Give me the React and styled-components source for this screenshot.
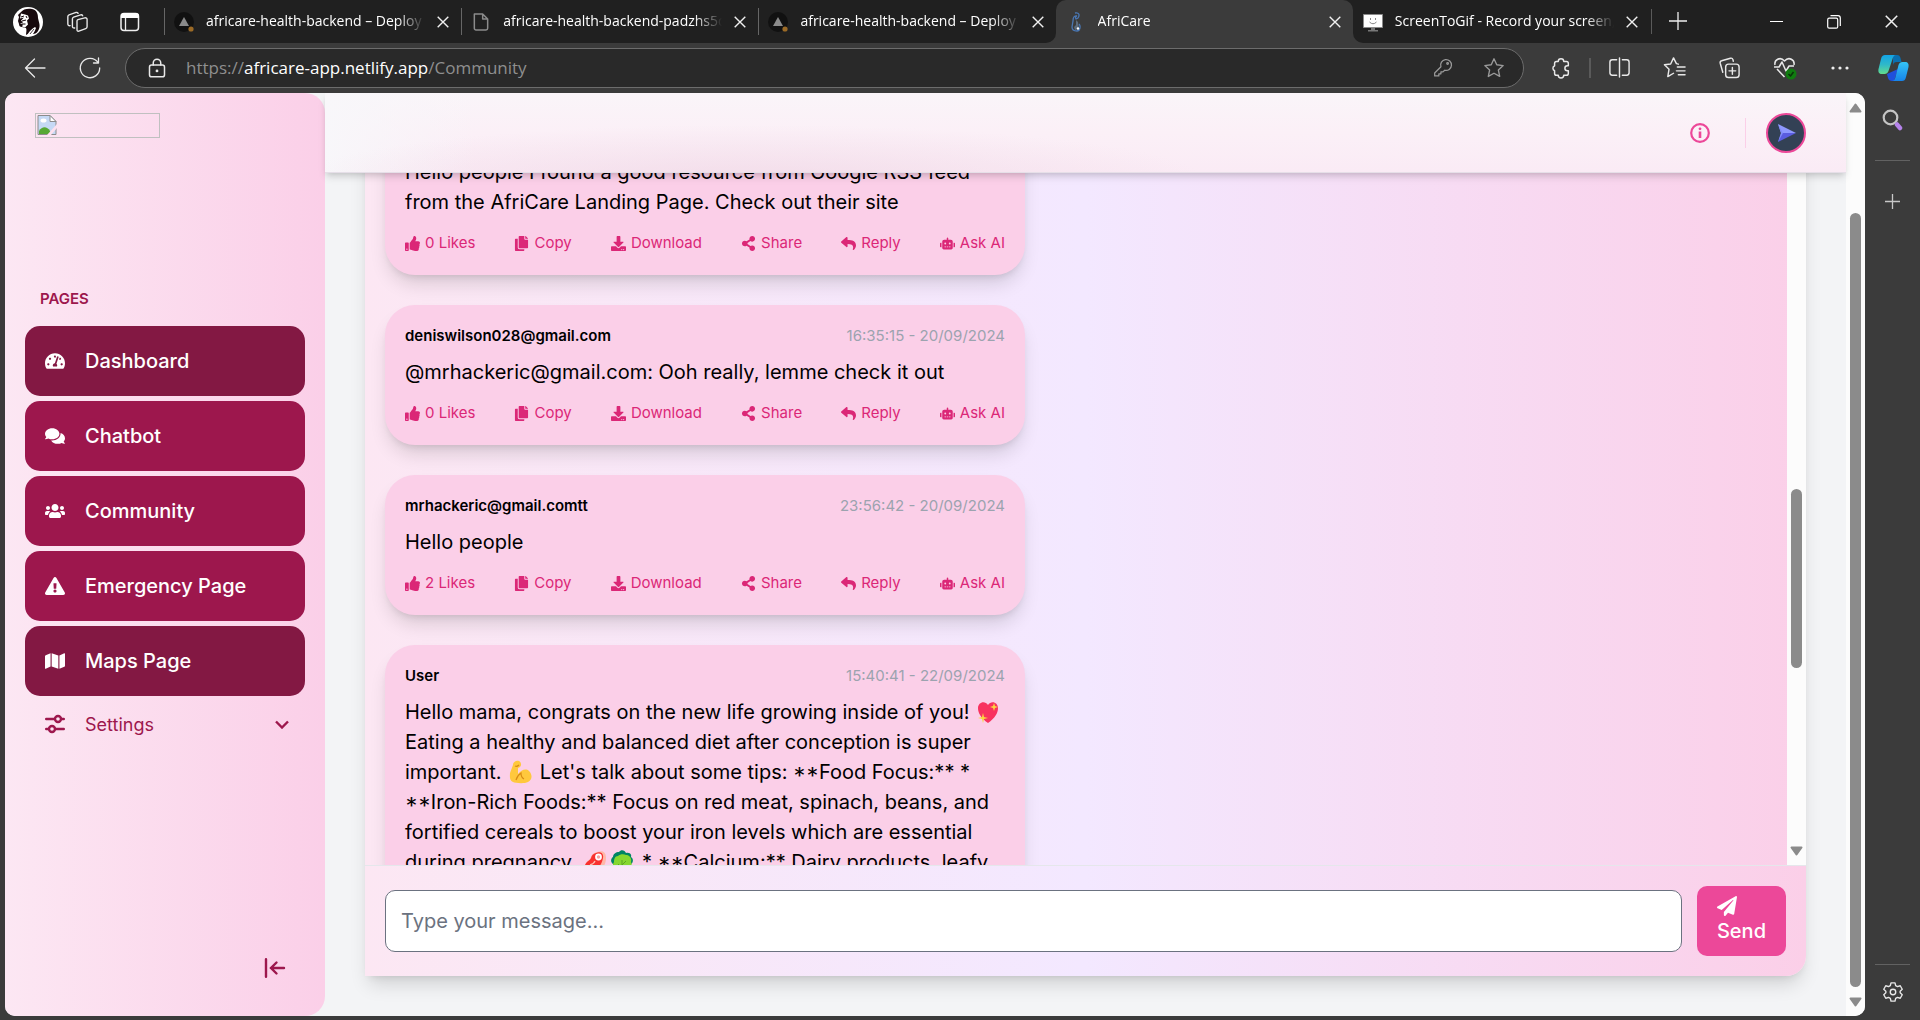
import React from "react";
import styled, { createGlobalStyle } from "styled-components";
import {
  FaTachometerAlt, FaComments, FaUsers, FaExclamationTriangle, FaMap,
  FaThumbsUp, FaCopy, FaDownload, FaShareAlt, FaReply, FaRobot, FaPaperPlane,
} from "react-icons/fa";

const GlobalStyle = createGlobalStyle`
  *, *::before, *::after { box-sizing: border-box; }
  body { margin: 0; background: #3b3b3b; font-family: Inter, "Liberation Sans", sans-serif; }
  button { font: inherit; color: inherit; background: none; border: 0; padding: 0; cursor: pointer; }
  a { color: inherit; text-decoration: none; }
  svg { display: block; flex-shrink: 0; }
`;

/* ---------- browser frame ---------- */

const Window = styled.div`
  height: 100vh;
  display: flex;
  flex-direction: column;
  overflow: hidden;
  background: #3b3b3b;
  color: #fff;
`;

const TabBar = styled.header`
  height: 43px;
  flex-shrink: 0;
  display: flex;
  background: #202020;
  font-family: "Open Sans", "Noto Sans", sans-serif;
  font-size: 14px;
`;

const TabTools = styled.div`
  width: 164px;
  padding-left: 13px;
  display: flex;
  align-items: center;
  gap: 17px;
`;

const Tabs = styled.div`
  display: flex;
  flex: 0 1 1486px;
  min-width: 0;
`;

const Tab = styled.div`
  flex: 1 1 0;
  min-width: 0;
  display: flex;
  align-items: center;
  gap: 12px;
  padding: 0 12px 0 9px;
  background: ${(p) => (p.$active ? "#3b3b3b" : "#202020")};
  border-radius: ${(p) => (p.$active ? "10px 10px 0 0" : p.$corner)};
  border-left: 1px solid transparent;
  border-image: ${(p) =>
    p.$divider ? "linear-gradient(transparent 9px, #666 9px 34px, transparent 34px) 1" : "none"};
`;

const TabSlot = styled.div`
  flex: 1 1 0;
  min-width: 0;
  display: flex;
  background: ${(p) => (p.$active ? "#202020" : "#3b3b3b")};
`;

const TabTitle = styled.span`
  flex: 1;
  min-width: 0;
  padding-bottom: 1px;
  line-height: 20px;
  white-space: nowrap;
  overflow: hidden;
  mask-image: linear-gradient(to right, #000 calc(100% - 28px), transparent);
`;

const IconButton = styled.button`
  width: ${(p) => p.$w || 55}px;
  height: ${(p) => p.$h || 40}px;
  flex-shrink: 0;
  display: flex;
  align-items: center;
  justify-content: center;
`;

const WindowControls = styled.div`
  margin-left: auto;
  display: flex;
`;

const Toolbar = styled.nav`
  height: 50px;
  flex-shrink: 0;
  display: flex;
  align-items: center;
  padding-left: 7px;
  padding-bottom: 1px;
`;

const Address = styled.div`
  flex: 1;
  min-width: 0;
  height: 40px;
  margin: 0 9px 0 8px;
  padding: 0 19px 0 21px;
  display: flex;
  align-items: center;
  border: 1px solid #6c6c6c;
  border-radius: 20px;
  background: #292929;
`;

const Url = styled.span`
  flex: 1;
  margin-left: 19px;
  font-family: "Open Sans", "Noto Sans", sans-serif;
  font-size: 17px;
  line-height: 24px;
  color: #8f8f8f;
  b { font-weight: 400; color: #fff; }
`;

const AddressIcons = styled.div`
  display: flex;
  gap: 31px;
`;

const Divider = styled.span`
  align-self: center;
  width: ${(p) => p.$w || 2}px;
  height: ${(p) => p.$h || 20}px;
  margin: 0 1px;
  background: #5a5a5a;
`;

const Body = styled.div`
  flex: 1;
  min-height: 0;
  display: flex;
  padding: 0 0 4px 5px;
`;

const EdgeBar = styled.aside`
  width: 55px;
  display: flex;
  flex-direction: column;
  align-items: center;
  padding: 7px 0 4px;
`;

const EdgeRule = styled.hr`
  width: 35px;
  height: 1px;
  margin: ${(p) => (p.$bottom ? "auto 0 7px" : "20px 0")};
  border: 0;
  flex-shrink: 0;
  background: #626262;
`;

/* ---------- page ---------- */

const Page = styled.div`
  flex: 1;
  min-width: 0;
  display: flex;
  overflow: hidden;
  border-radius: 10px;
  background: #f3f4f6;
  color: #000;
`;

const Sidebar = styled.aside`
  width: 320px;
  flex-shrink: 0;
  display: flex;
  flex-direction: column;
  padding: 20px 20px 28px;
  border-radius: 0 20px 20px 0;
  background: linear-gradient(to right, #fce7f3, #fbcfe8);
  color: #9d174d;
`;

const Logo = styled.div`
  width: 125px;
  height: 25px;
  margin: 0 10px 151px;
  padding: 1px;
  border: 1px solid #c0c0c0;
`;

const NavHeading = styled.h2`
  margin: 0 15px 17px;
  font-size: 15px;
  line-height: 20px;
  font-weight: 600;
`;

const NavList = styled.ul`
  list-style: none;
  margin: 0;
  padding: 0;
  display: flex;
  flex-direction: column;
  gap: 5px;
`;

const NavLink = styled.a`
  height: 70px;
  display: flex;
  align-items: center;
  gap: 20px;
  padding: 0 20px;
  border-radius: 15px;
  background: ${(p) => (p.$dark ? "#831843" : "#9d174d")};
  color: #fff;
  font-size: 20px;
  font-weight: 500;
`;

const SettingsButton = styled.button`
  width: 100%;
  height: 46px;
  display: flex;
  align-items: center;
  gap: 20px;
  padding: 0 16px 0 20px;
  font-size: 18px;
  span { flex: 1; text-align: left; }
`;

const Collapse = styled(IconButton)`
  margin: auto 10px 0 auto;
`;

const Main = styled.main`
  flex: 1;
  min-width: 0;
  display: grid;
  grid-template: 80px minmax(0, 1fr) / minmax(0, 1fr);
`;

const TopBar = styled.div`
  grid-area: 1 / 1;
  z-index: 2;
  display: flex;
  align-items: center;
  justify-content: flex-end;
  padding-right: 40px;
  border-bottom: 1px solid #e6dfe8;
  background:
    radial-gradient(ellipse 30% 70% at 28% 110%, rgba(238, 212, 226, 0.6), transparent),
    linear-gradient(to right, #f8f7fa, transparent 10%),
    linear-gradient(to bottom, #faf5f9, #fbf0f7 50%, #faebf5);
  box-shadow: 0 5px 8px -1px rgba(0, 0, 0, 0.12), 0 3px 5px -2px rgba(0, 0, 0, 0.1);
`;

const TopRule = styled.span`
  width: 1px;
  height: 30px;
  margin: 0 20px 0 25px;
  background: #fbcfe8;
`;

const Avatar = styled.button`
  width: 40px;
  height: 40px;
  display: flex;
  align-items: center;
  justify-content: center;
  border: 2px solid #ec4899;
  border-radius: 50%;
  background: #334155;
`;

const Chat = styled.section`
  grid-area: 1 / 1 / 3 / 2;
  margin: 0 40px 40px;
  display: flex;
  flex-direction: column;
  overflow: hidden;
  border-radius: 0 0 20px 0;
  background: linear-gradient(to right, #fce7f3, #f3e8ff, #fbcfe8);
  box-shadow: 0 12px 19px -4px rgba(0, 0, 0, 0.14), 0 5px 8px -5px rgba(0, 0, 0, 0.12);
`;

const Feed = styled.div`
  flex: 1;
  min-height: 0;
  display: flex;
`;

const Messages = styled.div`
  flex: 1;
  min-width: 0;
  overflow: hidden;
  display: flex;
  flex-direction: column;
  align-items: flex-start;
  gap: 30px;
  padding: 12px 20px 0;
`;

const Card = styled.article`
  width: 640px;
  max-width: 100%;
  flex-shrink: 0;
  padding: 20px;
  border-radius: 30px;
  background: #fbcfe8;
  box-shadow: 0 12px 19px -4px rgba(0, 0, 0, 0.14), 0 5px 8px -5px rgba(0, 0, 0, 0.14);
`;

const CardHead = styled.div`
  min-height: 22px;
  display: flex;
  justify-content: space-between;
  font-size: 15px;
  line-height: 22px;
  strong { font-weight: 600; }
  time { color: #9ca3af; }
`;

const CardText = styled.p`
  margin: 10px 0 0;
  font-size: 20px;
  line-height: 30px;
`;

const Stars = styled.span`
  font-feature-settings: "case" 1;
`;

const Actions = styled.div`
  margin-top: 14px;
  display: flex;
  justify-content: space-between;
  color: #db2777;
  font-size: 15px;
  line-height: 24px;
`;

const Action = styled.button`
  display: flex;
  align-items: center;
  gap: 5px;
  svg { width: 15px; height: 15px; }
`;

const Emoji = styled.svg`
  display: inline-block;
  width: 27px;
  height: 24px;
  vertical-align: -5px;
`;

const Composer = styled.form`
  flex-shrink: 0;
  display: flex;
  align-items: center;
  gap: 15px;
  padding: 20px;
  border-top: 1px solid #e5e7eb;
`;

const HiddenLabel = styled.label`
  position: absolute;
  width: 1px;
  height: 1px;
  overflow: hidden;
  clip-path: inset(50%);
`;

const MessageInput = styled.input`
  flex: 1;
  min-width: 0;
  height: 62px;
  padding: 0 15px;
  border: 1px solid #6b7280;
  border-radius: 10px;
  background: #fff;
  font: 400 20px/30px Inter, "Liberation Sans", sans-serif;
  &::placeholder { color: #6b7280; opacity: 1; }
`;

const SendButton = styled.button`
  height: 70px;
  padding: 0 20px;
  border-radius: 10px;
  background: #ec4899;
  color: #fff;
  font-size: 20px;
  line-height: 30px;
  font-weight: 500;
`;

const Track = styled.div`
  width: 19px;
  flex-shrink: 0;
  display: flex;
  flex-direction: column;
  align-items: center;
  padding: 10px 0 9px;
  background: #fcfcfc;
`;

const Thumb = styled.div`
  width: 11px;
  flex: ${(p) => p.$size} 0 0;
  border-radius: 6px;
  background: #8b8b8b;
`;

const Space = styled.div`
  flex: ${(p) => p.$size} 0 0;
`;

/* ---------- drawings ---------- */

const Line = ({ s = 24, w = 1.3, c = "#e8e8e8", children, ...rest }) => (
  <svg width={s} height={s} viewBox="0 0 24 24" fill="none" stroke={c} strokeWidth={w}
    strokeLinecap="round" strokeLinejoin="round" aria-hidden="true" {...rest}>
    {children}
  </svg>
);

const CloseIcon = ({ s = 12 }) => (
  <svg width={s} height={s} viewBox="0 0 12 12" stroke="#f0f0f0" strokeWidth="1.4" aria-hidden="true">
    <path d="M0.7 0.7 11.3 11.3M11.3 0.7 0.7 11.3" />
  </svg>
);

const Profile = () => (
  <svg width="30" height="30" viewBox="0 0 30 30" aria-hidden="true">
    <circle cx="15" cy="15" r="15" fill="#fff" />
    <path d="M8 5c2-3 7-4 11-3 5 1 6 5 6 9 1 5 3 8 0 13-1 2-3 3-5 3l2-4-4 2-5 3c0-3 1-5 0-7l-4-1c-2 0-3-1-3-3l-1-3 1-4-1-2z" fill="#17090d" />
    <path d="M8 6.500l4 1 3 1 1 3-2 2 1 4-3 3-3-1 1-2-3-1 3-1-2-2 3-3-4 1z" fill="#fff" />
    <path d="M8 10l3-1M9 14l4-1M13 9l1 2M8.500 17h4" stroke="#17090d" strokeWidth="1" />
    <path d="M15 27c1-3 4-5 7-7l1 1c-1 3-3 6-6 8z" fill="#fff" />
    <path d="M17 27l4-5" stroke="#17090d" strokeWidth=".8" />
  </svg>
);

const Favicon = ({ kind }) => {
  if (kind === "page")
    return <Line s={20} w={1.8} c="#8b8b8b"><path d="M4 2.5h10l6 6v11a2 2 0 0 1-2 2H6a2 2 0 0 1-2-2zM14 2.5v6h6" /></Line>;
  if (kind === "africare")
    return (
      <svg width="20" height="20" viewBox="0 0 20 20" fill="none" aria-hidden="true">
        <path d="M9 1c4-1 5 2 3 5l-2 1c-1-2 0-3 1-3-3-1-4 2-4 5l-1 6c0 3 2 4 5 4s4-5 2-7" stroke="#4a78b5" strokeWidth="1.3" />
        <path d="M10 8v5l-2 2 1 3 4-1-1-7z" fill="#5b6b7d" />
        <circle cx="12" cy="16.500" r="1.200" fill="#fff" />
      </svg>
    );
  if (kind === "screen")
    return (
      <svg width="20" height="20" viewBox="0 0 20 20" aria-hidden="true">
        <path d="M0.5 2.500h19v13H0.500z" fill="#fff" stroke="#8a8a8a" />
        <path d="M8 16h4v2h3v1.500H5V18h3z" fill="#777" />
        <path d="M7.500 6v2M12.500 6v2M6.500 10q3.500 3.500 7 0" fill="none" stroke="#888" />
      </svg>
    );
  return (
    <svg width="20" height="20" viewBox="0 0 20 20" aria-hidden="true">
      <circle cx="10" cy="10" r="10" fill="#111" />
      <path d="M10 5l5 9H5z" fill="#8a8a8a" />
      <circle cx="17" cy="17" r="2.600" fill="#9b6a26" />
    </svg>
  );
};

const Copilot = () => (
  <svg width="31" height="28" viewBox="0 0 31 28" aria-hidden="true">
    <defs>
      <linearGradient id="cpA" x1="0" y1="0" x2="0" y2="1">
        <stop offset="0" stopColor="#13a4e6" /><stop offset=".5" stopColor="#2fb8c9" /><stop offset="1" stopColor="#62dc8e" />
      </linearGradient>
      <linearGradient id="cpB" x1="0" y1="0" x2="0" y2="1">
        <stop offset="0" stopColor="#35c4f5" /><stop offset="1" stopColor="#1684ea" />
      </linearGradient>
    </defs>
    <path d="M15 1h4c2 0 3 1 3.500 3l1 4h-5c-2 0-3 1-3.500 3z" fill="#0a6fb0" />
    <path d="M9 20l1 4c.5 2 2 3 4 3h2l4-12z" fill="#1f50dc" />
    <path d="M7 1h11c-2 0-3 2-3.500 4l-4 12c-.7 2-2 3-4 3H4c-3 0-4-2-3.500-5L3 5c.7-3 2-4 4-4z" fill="url(#cpA)" />
    <path d="M24 27H14c2 0 3-2 3.500-4l3-12c.7-2 2-3 4-3H27c3 0 4 2 3.500 5L28 23c-.7 3-2 4-4 4z" fill="url(#cpB)" />
  </svg>
);

const BrokenImage = () => (
  <svg width="20" height="20" viewBox="0 0 20 20" aria-hidden="true">
    <path d="M1 0.500h12l6 6v13H1z" fill="#c5d9f5" stroke="#8c8c8c" />
    <path d="M13 .5v6h6z" fill="#fff" stroke="#8c8c8c" />
    <ellipse cx="6.500" cy="5.500" rx="3" ry="2" fill="#fff" />
    <path d="M2 19v-3c3-5 8-5 11 0l1 3z" fill="#56a934" />
    <path d="M10 20 20 9v4l-6 7z" fill="#fce1ef" />
  </svg>
);

const Triangle = ({ down }) => (
  <svg width="13" height="10" viewBox="0 0 13 10" aria-hidden="true">
    <path d={down ? "M1.500 1.500h10l-5 7z" : "M1.500 8.500h10l-5-7z"} fill="#8b8b8b" stroke="#8b8b8b" strokeWidth="2" strokeLinejoin="round" />
  </svg>
);

const SettingsIcon = () => (
  <svg width="20" height="20" viewBox="0 0 20 20" fill="none" stroke="#9d174d" strokeWidth="2.400" strokeLinecap="round" aria-hidden="true">
    <path d="M1.200 5h8M17 5h1.800M1.200 15H3M11 15h7.800" />
    <circle cx="13" cy="5" r="3" />
    <circle cx="7" cy="15" r="3" />
  </svg>
);

const Heart = () => (
  <Emoji viewBox="0 0 27 24" role="img" aria-label="sparkling heart">
    <path d="M13 23C6 18 3 13 3 8c0-6 7-8 10-3 3-5 10-3 10 3 0 5-3 10-10 15z" fill="#f8325f" />
    <path d="M19 3l1 3 3 1-3 1-1 3-1-3-3-1 3-1zM8 13l1 4 4 1-4 1-1 4-1-4-4-1 4-1z" fill="#fcd53f" />
  </Emoji>
);
const Biceps = () => (
  <Emoji viewBox="0 0 27 24" role="img" aria-label="flexed biceps">
    <path d="M6 5c0-3 3-5 6-4 2 1 3 4 1 6-1 1-2 0-2 2v5c3-4 8-6 11-3 4 4 3 9-1 11-4 2-13 1-15 0-4-2-3-6-3-9 1-3 2-5 3-8z" fill="#ffc83d" />
    <path d="M8 6c2 1 3 0 4-1M9 20c1-4 2-5 5-7 0 3 1 5 3 6" fill="none" stroke="#d98c17" strokeWidth="1.200" />
  </Emoji>
);
const Meat = () => (
  <Emoji viewBox="0 0 27 24" role="img" aria-label="cut of meat">
    <path d="M15 2c6-2 9 0 9 6s-3 11-8 13c-5 1-13 1-13-4 0-6 5-6 6-10 1-3 3-4 6-5z" fill="#ffb8a8" />
    <path d="M14 3c4-2 8 0 7 5s-3 9-7 11c-4 1-11 2-11-3 0-4 5-5 6-8 1-3 2-4 5-5z" fill="#f8312f" />
    <circle cx="16.500" cy="7" r="3.400" fill="#fff" /><circle cx="16.500" cy="7" r="1.700" fill="#f5a3a0" />
    <path d="M8 15q4-1 5-4" stroke="#ffb8a8" fill="none" strokeWidth="1.300" />
  </Emoji>
);
const Greens = () => (
  <Emoji viewBox="0 0 27 24" role="img" aria-label="leafy green">
    <path d="M10 2c2-3 6-2 7 1 3-1 6 1 5 4 3 2 2 6 0 7 0 5-4 9-9 9s-9-4-9-9C1 12 2 8 4 7c0-3 3-5 6-5z" fill="#008463" />
    <path d="M9 6c2-2 6-2 8-1 4 0 6 4 5 7 2 4-1 9-5 9-3 3-9 2-10-1-3-1-4-5-2-8 0-3 1-6 4-6z" fill="#86d72f" />
    <path d="M13 21V10M13 15l4-4M13 18l-4-4" stroke="#5da423" fill="none" />
  </Emoji>
);

/* ---------- data ---------- */

const tabs = [
  { icon: "vercel", title: "africare-health-backend – Deploy", divider: true },
  { icon: "page", title: "africare-health-backend-padzhs5o", divider: true },
  { icon: "vercel", title: "africare-health-backend – Deploy", divider: true, corner: "0 0 10px 0" },
  { icon: "africare", title: "AfriCare", active: true },
  { icon: "screen", title: "ScreenToGif - Record your screen,", corner: "0 0 0 10px" },
];

const pages = [
  { label: "Dashboard", Icon: FaTachometerAlt, dark: true },
  { label: "Chatbot", Icon: FaComments },
  { label: "Community", Icon: FaUsers },
  { label: "Emergency Page", Icon: FaExclamationTriangle },
  { label: "Maps Page", Icon: FaMap, dark: true },
];

const messages = [
  {
    likes: 0,
    text: "Hello people I found a good resource from Google RSS feed from the AfriCare Landing Page. Check out their site",
  },
  {
    name: "deniswilson028@gmail.com", time: "16:35:15 - 20/09/2024", likes: 0,
    text: "@mrhackeric@gmail.com: Ooh really, lemme check it out",
  },
  { name: "mrhackeric@gmail.comtt", time: "23:56:42 - 20/09/2024", likes: 2, text: "Hello people" },
  {
    name: "User", time: "15:40:41 - 22/09/2024",
    text: (
      <>
        Hello mama, congrats on the new life growing inside of you! <Heart /> Eating a healthy and
        balanced diet after conception is super important. <Biceps /> Let's talk about some tips:{" "}
        <Stars>**</Stars>Food Focus:** * <Stars>**</Stars>Iron-Rich Foods:** Focus on red meat,
        spinach, beans, and fortified cereals to boost your iron levels which are essential during
        pregnancy. <Meat /><Greens /> * <Stars>**</Stars>Calcium:** Dairy products, leafy
      </>
    ),
  },
];

const actions = [
  ["Copy", FaCopy], ["Download", FaDownload], ["Share", FaShareAlt], ["Reply", FaReply], ["Ask AI", FaRobot],
];

function Message({ name, time, text, likes }) {
  return (
    <Card>
      <CardHead>{name && <strong>{name}</strong>}{time && <time>{time}</time>}</CardHead>
      <CardText>{text}</CardText>
      {likes !== undefined && (
        <Actions>
          <Action type="button"><FaThumbsUp />{likes} Likes</Action>
          {actions.map(([label, Icon]) => (
            <Action type="button" key={label}><Icon />{label}</Action>
          ))}
        </Actions>
      )}
    </Card>
  );
}

function ScrollTrack({ before, size, after }) {
  return (
    <Track aria-hidden="true">
      <Triangle />
      <Space $size={before} /><Thumb $size={size} /><Space $size={after} />
      <Triangle down />
    </Track>
  );
}

export default function App() {
  return (
    <Window>
      <GlobalStyle />
      <TabBar>
        <TabTools>
          <IconButton $w={30} $h={30} aria-label="Profile"><Profile /></IconButton>
          <IconButton $w={34} $h={30} aria-label="Workspaces">
            <Line s={22} w={1.5}><path d="M13 9.500 20.500 7.500c1.300-.3 2.500.5 2.500 1.800v8c0 .9-.6 1.700-1.500 2L14 22c-1.300.4-2-.4-2-1.600V11c0-.7.400-1.300 1-1.500z" /><path d="M9.500 18.500C8 18.800 7 18 7 16.800V8.500c0-.8.500-1.500 1.300-1.800L16 4.200c1-.3 1.800.1 2.200 1" /><path d="M4.500 16C3 16.200 2 15.500 2 14.200V6c0-.9.500-1.500 1.300-1.800L11 1.600c1-.3 1.800.1 2.200 1" /></Line>
          </IconButton>
          <IconButton $w={38} $h={30} aria-label="Tab actions">
            <svg width="20" height="20" viewBox="0 0 20 20" aria-hidden="true"><rect x="1" y="1.500" width="17.500" height="17" rx="3" fill="none" stroke="#eee" strokeWidth="1.500" /><path d="M1 6V4a3 3 0 0 1 3-3h12a3 3 0 0 1 3 3v2z" fill="#fff" /><path d="M5.500 6v12" stroke="#eee" strokeWidth="1.300" /></svg>
          </IconButton>
        </TabTools>
        <Tabs>
          {tabs.map((t, i) => (
            <TabSlot key={i} $active={t.active}>
              <Tab $active={t.active} $divider={t.divider} $corner={t.corner}>
                <Favicon kind={t.icon} />
                <TabTitle>{t.title}</TabTitle>
                <IconButton $w={12} $h={20} aria-label="Close tab"><CloseIcon /></IconButton>
              </Tab>
            </TabSlot>
          ))}
        </Tabs>
        <Divider $w={1} $h={25} />
        <IconButton $w={50} $h={42} aria-label="New tab">
          <svg width="18" height="18" viewBox="0 0 18 18" stroke="#eee" strokeWidth="1.300" aria-hidden="true"><path d="M9 0v18M0 9h18" /></svg>
        </IconButton>
        <WindowControls>
          <IconButton $w={57} $h={43} aria-label="Minimize"><svg width="13" height="3" stroke="#fff" aria-hidden="true"><path d="M0 1.500h13" /></svg></IconButton>
          <IconButton $w={57} $h={43} aria-label="Restore"><svg width="14" height="14" viewBox="0 0 14 14" fill="none" stroke="#fff" strokeWidth="1.200" aria-hidden="true"><rect x="0.700" y="3.200" width="10" height="10" rx="1.500" /><path d="M3.500.7H11a2.300 2.300 0 0 1 2.300 2.300v8" /></svg></IconButton>
          <IconButton $w={58} $h={43} aria-label="Close"><CloseIcon s={13} /></IconButton>
        </WindowControls>
      </TabBar>

      <Toolbar>
        <IconButton aria-label="Back"><Line><path d="M22 12H2.500M11.500 3l-9 9 9 9" /></Line></IconButton>
        <IconButton aria-label="Refresh"><Line><path d="M20 6.500A9.700 9.700 0 1 0 21.700 12M20.500 2v5h-5" /></Line></IconButton>
        <Address>
          <Line s={20} w={1.800}><rect x="3" y="8.500" width="18" height="14" rx="2.500" /><path d="M7.500 8.500V6a4.500 4.500 0 0 1 9 0v2.500" /><circle cx="12" cy="15.500" r=".8" fill="#fff" /></Line>
          <Url>https://<b>africare-app.netlify.app</b>/Community</Url>
          <AddressIcons>
            <IconButton $w={20} $h={24} aria-label="Passwords"><Line s={20} w={1.500} c="#9a9a9a"><path d="M9.500 10.500A6.500 6.500 0 1 1 14 14.700l-2 2H9.500V19H7v2.500H2V18z" /><circle cx="17.500" cy="6.500" r="1" /></Line></IconButton>
            <IconButton $w={20} $h={24} aria-label="Favorite"><Line s={22} w={1.500} c="#9a9a9a"><path d="m12 2 3 6.500 7 .9-5.200 4.800 1.400 7-6.200-3.500-6.200 3.500 1.400-7L2 9.400l7-.9z" /></Line></IconButton>
          </AddressIcons>
        </Address>
        <IconButton aria-label="Extensions"><Line s={22} w={1.600}><path d="M9 5a3 3 0 0 1 6 0h3a2 2 0 0 1 2 2v2.500h-1a2.700 2.700 0 0 0 0 5.500h1v3a2 2 0 0 1-2 2h-3a3 3 0 0 1-6 0H7a2 2 0 0 1-2-2v-3a3 3 0 0 1 0-5.500V7a2 2 0 0 1 2-2z" /></Line></IconButton>
        <Divider />
        <IconButton aria-label="Split screen"><Line s={23} w={1.500}><path d="M9 4H4.500A2.500 2.500 0 0 0 2 6.500v11A2.500 2.500 0 0 0 4.500 20H9M15 4h4.500A2.500 2.500 0 0 1 22 6.500v11a2.500 2.500 0 0 1-2.500 2.500H15M12 2v20" /></Line></IconButton>
        <IconButton aria-label="Favorites"><Line s={23} w={1.500}><path d="M16 8.500 14 8l-3-6-3 6.300-6.500.8 4.800 4.700L5 21.500l6-3.500M15 11.500h8M14 15.500h9M16 19.500h7" /></Line></IconButton>
        <IconButton aria-label="Collections"><Line s={23} w={1.500}><rect x="8" y="8.500" width="14" height="14" rx="3" /><path d="M15 12v7M11.500 15.500h7M5 17 2.300 7.500c-.3-1.200.3-2.300 1.500-2.600L13 2.300c1.200-.3 2.200.3 2.600 1.500L16 5.500" /></Line></IconButton>
        <IconButton aria-label="Browser essentials">
          <svg width="24" height="24" viewBox="0 0 24 24" fill="none" stroke="#e8e8e8" strokeWidth="1.500" strokeLinejoin="round" aria-hidden="true"><path d="M2 9C1 4 7 0 11.500 5 16 0 22 4 21 9M4 13l7.500 8M1 11h5l3-5 4 9 3-5h5" /><circle cx="18" cy="18" r="5.500" fill="#107c10" stroke="none" /><path d="m15.500 18 2 2 3-4" stroke="#0a330a" /></svg>
        </IconButton>
        <IconButton aria-label="Settings and more"><svg width="18" height="4" fill="#eee" aria-hidden="true"><circle cx="2" cy="2" r="1.600" /><circle cx="9" cy="2" r="1.600" /><circle cx="16" cy="2" r="1.600" /></svg></IconButton>
        <IconButton $w={53} aria-label="Copilot"><Copilot /></IconButton>
      </Toolbar>

      <Body>
        <Page>
          <Sidebar>
            <Logo role="img" aria-label="Logo"><BrokenImage /></Logo>
            <NavHeading>PAGES</NavHeading>
            <NavList>
              {pages.map(({ label, Icon, dark }) => (
                <li key={label}><NavLink href="#" $dark={dark}><Icon size={20} />{label}</NavLink></li>
              ))}
              <li>
                <SettingsButton type="button">
                  <SettingsIcon /><span>Settings</span>
                  <svg width="14" height="9" viewBox="0 0 14 9" fill="none" stroke="#9d174d" strokeWidth="2.400" aria-hidden="true"><path d="m1 1.500 6 6 6-6" /></svg>
                </SettingsButton>
              </li>
            </NavList>
            <Collapse $w={40} $h={40} aria-label="Collapse sidebar">
              <svg width="22" height="20" viewBox="0 0 22 20" fill="none" stroke="#9d174d" strokeWidth="2.400" strokeLinecap="round" aria-hidden="true"><path d="M2 1.200v17.600M20 10H7M12.500 4.500 7 10l5.500 5.500" /></svg>
            </Collapse>
          </Sidebar>

          <Main>
            <TopBar>
              <IconButton $w={40} $h={40} aria-label="Information">
                <svg width="20" height="20" viewBox="0 0 20 20" fill="none" stroke="#ec4899" strokeWidth="2.200" aria-hidden="true"><circle cx="10" cy="10" r="8.800" /><path d="M10 8.500V15" strokeWidth="2.600" /><circle cx="10" cy="5.800" r="1.400" fill="#ec4899" stroke="none" /></svg>
              </IconButton>
              <TopRule />
              <Avatar aria-label="Account">
                <svg width="20" height="20" viewBox="0 0 20 20" aria-hidden="true"><path d="M2 1l18 9H5z" fill="#8e98ff" /><path d="M2 19l18-9H5z" fill="#5a5ce0" /><path d="M2 1l3 9-3 9 5-9z" fill="#818cf8" /></svg>
              </Avatar>
            </TopBar>
            <Chat>
              <Feed>
                <Messages>
                  {messages.map((m, i) => <Message key={i} {...m} />)}
                </Messages>
                <ScrollTrack before={377} size={179} after={178} />
              </Feed>
              <Composer onSubmit={(e) => e.preventDefault()}>
                <HiddenLabel htmlFor="message">Message</HiddenLabel>
                <MessageInput id="message" type="text" placeholder="Type your message..." />
                <SendButton type="submit"><FaPaperPlane size={20} />Send</SendButton>
              </Composer>
            </Chat>
          </Main>
          <ScrollTrack before={100} size={774} after={10} />
        </Page>

        <EdgeBar>
          <IconButton $h={40} aria-label="Search">
            <svg width="22" height="22" viewBox="0 0 22 22" fill="none" aria-hidden="true"><circle cx="8.500" cy="8.500" r="6.800" stroke="#c4c4c4" strokeWidth="2.200" /><path d="m15 15.500 3 3.500" stroke="#b583ea" strokeWidth="4.500" strokeLinecap="round" /></svg>
          </IconButton>
          <EdgeRule />
          <IconButton $h={40} aria-label="Add"><svg width="15" height="15" stroke="#c8c8c8" strokeWidth="1.300" aria-hidden="true"><path d="M7.500 0v15M0 7.500h15" /></svg></IconButton>
          <EdgeRule $bottom />
          <IconButton $h={40} aria-label="Customize">
            <Line s={22} w={1.500}><circle cx="12" cy="12" r="3" /><path d="M9.800 2h4.400l.7 3.100 2 1.100 3-1 2.200 3.800-2.300 2.100v1.800l2.300 2.100-2.200 3.800-3-1-2 1.100-.7 3.100H9.800l-.7-3.100-2-1.100-3 1L1.900 15l2.300-2.100v-1.800L1.900 9l2.200-3.800 3 1 2-1.100z" /></Line>
          </IconButton>
        </EdgeBar>
      </Body>
    </Window>
  );
}
